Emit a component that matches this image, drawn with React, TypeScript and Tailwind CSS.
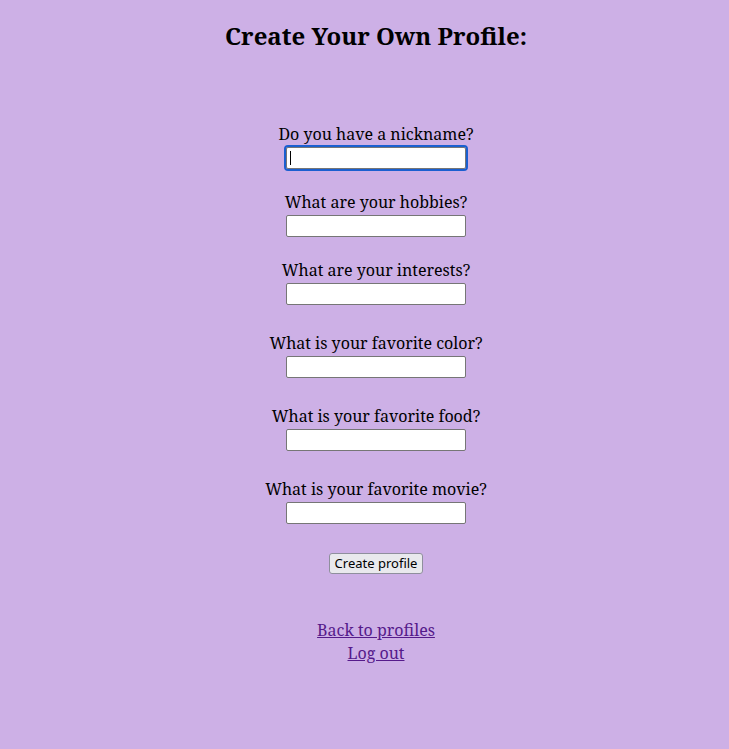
import React from "react";

const questions = [
  "Do you have a nickname?",
  "What are your hobbies?",
  "What are your interests?",
  "What is your favorite color?",
  "What is your favorite food?",
  "What is your favorite movie?",
];

const App: React.FC = () => {
  return (
    <div className="min-h-[749px] pl-[23px] bg-[#cdb0e6] text-black font-['Noto_Serif','DejaVu_Serif',serif] text-center">
      <h2 className="pt-[20px] text-[24px] leading-[32px] font-bold">Create Your Own Profile:</h2>

      <form className="flex flex-col items-center pt-[71px]">
        {questions.map((q, i) => (
          <div key={q} className={`flex flex-col items-center ${i === 0 ? "" : i < 3 ? "mt-[22px]" : "mt-[27px]"}`}>
            <label className="text-[16px] leading-[22px]">{q}</label>
            {i === 0 ? (
              <div className="relative mt-[2px]">
                <input
                  type="text"
                  className="block w-[180px] h-[22px] bg-white border border-[#767676] rounded-[2px] outline-2 outline-[#1a5fd0] outline-offset-0"
                />
                <span className="absolute left-[4px] top-[4px] w-px h-[14px] bg-black" />
              </div>
            ) : (
              <input
                type="text"
                className="block mt-[2px] w-[180px] h-[22px] bg-white border border-[#767676] rounded-[2px]"
              />
            )}
          </div>
        ))}

        <button
          type="button"
          className="mt-[29px] h-[21px] px-[5px] bg-[#e9e9ed] border border-[#8f8f9d] rounded-[3px] text-[13px] leading-[17px] font-['Noto_Sans','Open_Sans',sans-serif] text-black"
        >
          Create profile
        </button>
      </form>

      <div className="flex flex-col items-center pt-[45px] text-[16px] leading-[23px]">
        <a href="#" className="underline text-[#551a8b]">Back to profiles</a>
        <a href="#" className="underline text-[#551a8b]">Log out</a>
      </div>
    </div>
  );
};

export default App;
